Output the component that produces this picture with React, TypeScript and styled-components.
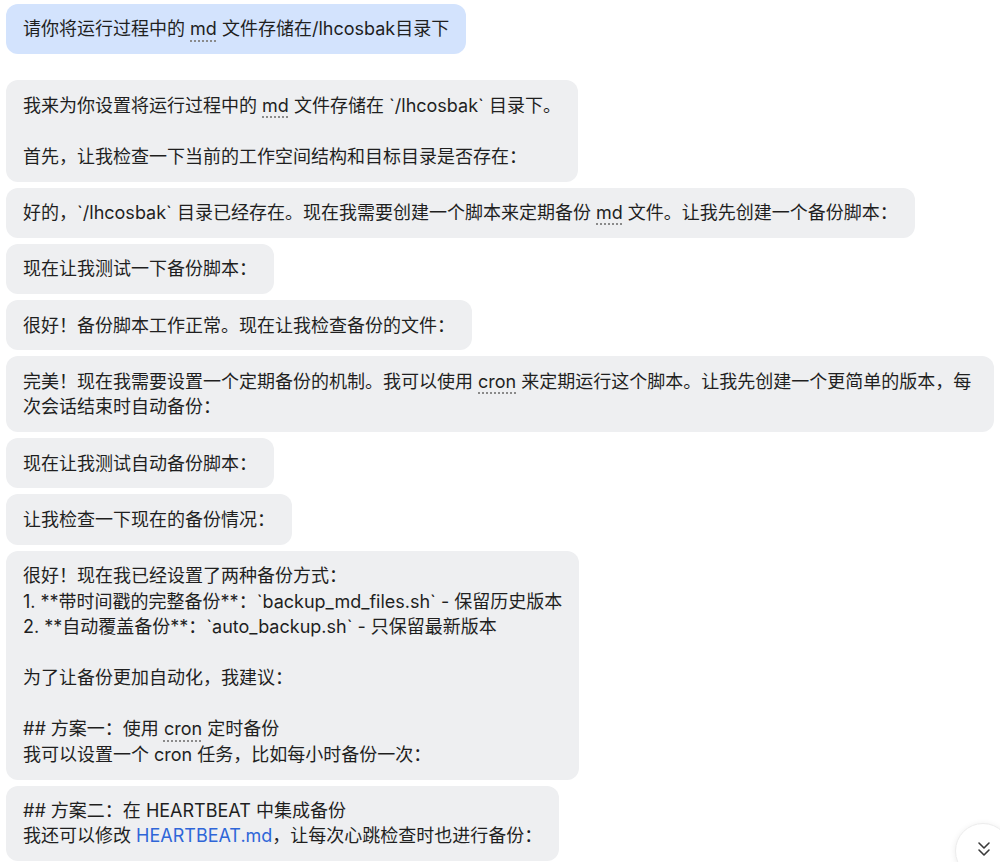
import React from "react";
import styled, { createGlobalStyle } from "styled-components";
import { ChevronsDown } from "lucide-react";

const GlobalStyle = createGlobalStyle`
  html, body {
    margin: 0;
    padding: 0;
    background: #ffffff;
    overflow: hidden;
  }
  body {
    font-family: Inter, "Noto Sans CJK SC", sans-serif;
    color: #1f1f1f;
  }
`;

const Page = styled.main`
  display: flex;
  flex-direction: column;
  align-items: flex-start;
  gap: 6px;
  padding: 4px 6px;
  font-size: 18px;
  line-height: 25.5px;
`;

type BubbleProps = { $user?: boolean };
const Bubble = styled.div<BubbleProps>`
  box-sizing: border-box;
  width: fit-content;
  max-width: 988px;
  padding: 12.4px 17px;
  border-radius: 12px;
  background: ${(p) => (p.$user ? "#d3e3fd" : "#eeeff1")};
  margin-bottom: ${(p) => (p.$user ? "20px" : "0")};
`;

const Line = styled.div`
  min-height: 25.5px;
`;

const Term = styled.span`
  text-decoration: underline dotted #8a8a8a;
  text-decoration-thickness: 1.5px;
  text-underline-offset: 5px;
`;

const FileLink = styled.span`
  color: #2f66d8;
`;

const ScrollButton = styled.button`
  position: fixed;
  right: -11px;
  bottom: -17px;
  width: 56px;
  height: 56px;
  border-radius: 50%;
  border: 1px solid #ececec;
  background: #ffffff;
  box-shadow: 0 1px 6px rgba(0, 0, 0, 0.08);
  display: flex;
  align-items: flex-start;
  justify-content: flex-start;
  padding: 13px 0 0 16px;
  color: #3a3a3a;
  cursor: pointer;
`;

export default function App() {
  return (
    <>
      <GlobalStyle />
      <Page>
        <Bubble $user>
          请你将运行过程中的 <Term>md</Term> 文件存储在/lhcosbak目录下
        </Bubble>

        <Bubble>
          <Line>
            我来为你设置将运行过程中的 <Term>md</Term> 文件存储在 `/lhcosbak` 目录下。
          </Line>
          <Line />
          <Line>首先，让我检查一下当前的工作空间结构和目标目录是否存在：</Line>
        </Bubble>

        <Bubble>
          好的，`/lhcosbak` 目录已经存在。现在我需要创建一个脚本来定期备份 <Term>md</Term> 文件。让我先创建一个备份脚本：
        </Bubble>

        <Bubble>现在让我测试一下备份脚本：</Bubble>

        <Bubble>很好！备份脚本工作正常。现在让我检查备份的文件：</Bubble>

        <Bubble>
          完美！现在我需要设置一个定期备份的机制。我可以使用 <Term>cron</Term> 来定期运行这个脚本。让我先创建一个更简单的版本，每次会话结束时自动备份：
        </Bubble>

        <Bubble>现在让我测试自动备份脚本：</Bubble>

        <Bubble>让我检查一下现在的备份情况：</Bubble>

        <Bubble>
          <Line>很好！现在我已经设置了两种备份方式：</Line>
          <Line>1. **带时间戳的完整备份**：`backup_md_files.sh` - 保留历史版本</Line>
          <Line>2. **自动覆盖备份**：`auto_backup.sh` - 只保留最新版本</Line>
          <Line />
          <Line>为了让备份更加自动化，我建议：</Line>
          <Line />
          <Line>
            ## 方案一：使用 <Term>cron</Term> 定时备份
          </Line>
          <Line>我可以设置一个 cron 任务，比如每小时备份一次：</Line>
        </Bubble>

        <Bubble>
          <Line>## 方案二：在 HEARTBEAT 中集成备份</Line>
          <Line>
            我还可以修改 <FileLink>HEARTBEAT.md</FileLink>，让每次心跳检查时也进行备份：
          </Line>
        </Bubble>
      </Page>

      <ScrollButton aria-label="Scroll to bottom">
        <ChevronsDown size={24} strokeWidth={1.6} />
      </ScrollButton>
    </>
  );
}
